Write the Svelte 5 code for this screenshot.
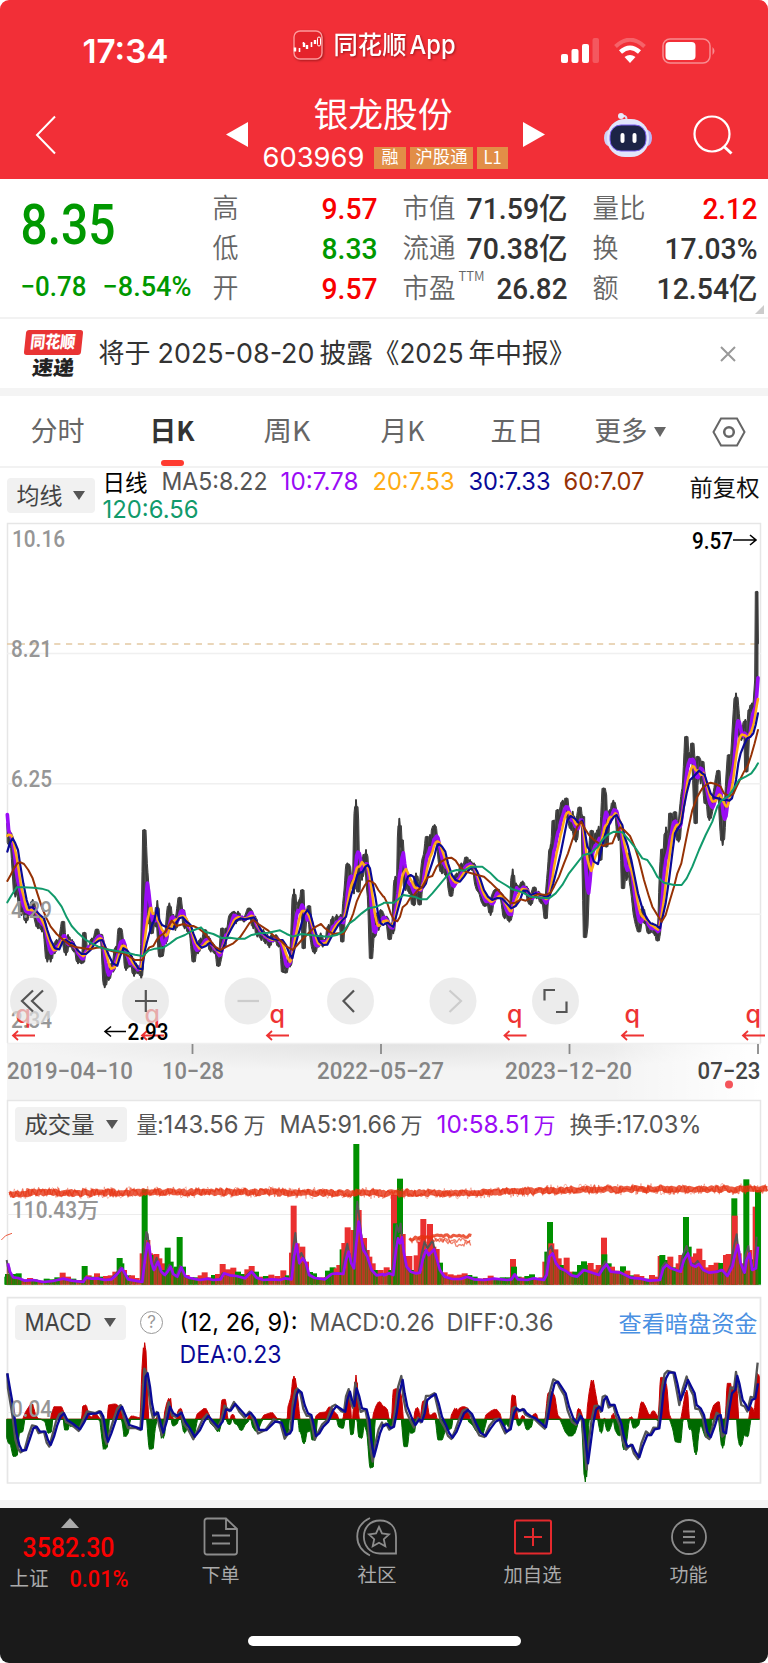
<script lang="ts">
	/**
	 * Stock detail page: quote header, daily K chart, volume and MACD panels.
	 * Chart coordinates are in thirds of a pixel.
	 */

	type Point = [number, number];

	const quotes = [
		{ label: '高', lw: 26, value: '9.57', w: 56, tone: 'up' },
		{ label: '市值', lw: 53, value: '71.59亿', w: 101, tone: '' },
		{ label: '量比', lw: 53, value: '2.12', w: 55, tone: 'up' },
		{ label: '低', lw: 26, value: '8.33', w: 56, tone: 'down' },
		{ label: '流通', lw: 53, value: '70.38亿', w: 101, tone: '' },
		{ label: '换', lw: 26, value: '17.03%', w: 93, tone: '' },
		{ label: '开', lw: 26, value: '9.57', w: 56, tone: 'up' },
		{ label: '市盈', lw: 53, sup: 'TTM', value: '26.82', w: 71, tone: '' },
		{ label: '额', lw: 26, value: '12.54亿', w: 101, tone: '' }
	];

	const tabs = [
		{ name: '分时', w: 54 },
		{ name: '日K', w: 45, active: true },
		{ name: '周K', w: 47 },
		{ name: '月K', w: 44 },
		{ name: '五日', w: 53 }
	];

	const averages = [
		{ text: 'MA5:8.22', w: 106, color: 'c5' },
		{ text: '10:7.78', w: 78, color: 'c10' },
		{ text: '20:7.53', w: 82, color: 'c20' },
		{ text: '30:7.33', w: 82, color: 'c30' },
		{ text: '60:7.07', w: 81, color: 'c60' }
	];

	// "x,y x,y ..." for the left and right halves of a plot
	function parse(text: string): Point[] {
		return text.trim().split(/\s+/).map((p) => p.split(',').map(Number) as Point);
	}

	function join(left: string, right: string, ly = 0, ry = 0): Point[] {
		return [
			...parse(left).map(([x, y]) => [x, y + ly] as Point),
			...parse(right).map(([x, y]) => [x + 1152, y + ry] as Point)
		];
	}

	const str = (pts: Point[]) => pts.map((p) => p.map((n) => n.toFixed(1)).join(',')).join(' ');

	const price = join(
		`22,70 28,140 34,100 40,190 46,290 52,240 58,300 64,345 70,310 78,368 84,330 90,345 98,300 106,350 114,385 120,350 126,395 132,360 138,430 142,485 148,440 152,485 158,430 164,460 170,420 178,440 184,400 189,365 193,430 198,465 204,405 210,440 216,420 222,455 228,440 234,490 240,465 244,490 250,485 253,398 258,460 264,440 270,450 276,415 282,430 286,410 291,388 297,415 303,404 308,430 314,562 320,520 326,540 334,490 340,515 348,440 354,460 358,385 362,388 368,450 374,430 378,510 384,480 390,500 396,470 402,528 408,490 414,520 420,500 424,535 428,400 433,90 437,190 442,260 446,370 450,330 455,400 462,340 468,380 472,303 476,400 480,470 486,468 492,400 498,430 504,345 508,310 514,370 520,345 526,390 532,350 539,293 544,340 549,330 554,385 560,360 566,400 572,380 577,440 581,485 588,430 594,460 602,415 608,440 615,390 620,430 626,410 632,455 638,430 644,460 650,450 655,498 661,470 667,385 673,440 678,385 684,400 690,350 696,340 702,335 708,370 714,335 720,360 726,350 732,365 740,345 747,325 754,335 760,385 766,350 772,410 778,380 784,420 790,390 796,430 802,405 808,442 814,405 820,425 828,405 836,440 844,425 849,515 857,518 864,480 870,500 876,440 882,268 886,330 892,340 898,300 902,320 907,270 911,445 915,330 921,360 927,318 933,400 939,440 944,460 950,420 956,440 962,400 968,440 974,420 980,430 986,375 992,400 998,350 1004,390 1010,345 1016,370 1022,345 1027,425 1032,320 1038,260 1042,190 1047,200 1052,260 1058,230 1062,280 1065,120 1068,0 1071,60 1075,275 1080,180 1086,240 1090,165 1094,200 1098,150 1103,250 1108,300 1113,475 1118,400 1124,410 1130,340 1136,390 1142,330 1148,345`,
		`2,425 8,410 13,440 17,478 24,430 28,460 34,290 40,350 43,290 46,116 50,200 53,180 58,260 64,330 70,300 76,340 82,310 86,370 90,376 96,280 102,330 107,374 112,300 118,240 124,220 129,170 134,230 138,165 142,220 147,150 152,135 157,190 162,180 168,250 174,280 180,230 186,290 192,260 196,320 201,348 208,300 212,315 218,280 226,300 232,250 240,270 247,232 253,270 258,240 264,270 270,250 276,310 282,330 290,340 296,365 303,378 310,350 315,370 320,405 326,350 334,330 341,328 347,350 352,340 358,380 362,415 368,395 376,425 382,400 386,268 390,340 396,310 402,340 410,320 416,304 422,340 428,320 434,360 440,375 446,340 451,322 458,355 464,335 472,370 478,350 485,415 490,330 496,260 500,195 504,240 509,122 514,190 518,130 521,90 526,130 530,100 536,62 541,80 547,55 552,110 558,130 562,150 566,95 571,160 576,185 581,120 587,82 592,130 597,110 599,250 603,472 607,440 612,300 617,240 623,152 628,210 634,160 640,180 644,140 649,240 654,130 659,25 664,50 667,200 673,120 678,90 683,100 688,62 693,90 698,100 704,180 710,130 714,200 717,325 722,260 728,300 734,220 740,300 746,340 752,400 758,430 765,455 770,420 776,380 782,430 788,420 794,460 800,455 806,430 812,465 816,450 821,482 826,450 830,300 835,208 840,270 846,142 851,230 856,170 859,100 864,110 868,140 873,96 878,160 884,185 890,100 896,40 900,20 904,-60 907,-130 911,-40 915,-80 921,-60 925,-110 930,-30 935,130 938,-40 941,-70 946,-60 950,10 955,-55 960,10 965,70 970,40 976,120 982,90 988,60 994,30 998,0 1003,-28 1008,60 1012,140 1016,195 1022,90 1027,60 1030,0 1035,-75 1040,30 1046,-90 1051,-180 1056,-260 1061,-200 1066,-140 1072,-120 1077,-150 1084,-180 1087,-25 1091,-120 1097,-210 1100,-210 1104,-230 1109,-200 1113,-240 1117,-300 1119,-565 1122,-410`,
		840,
		780
	);

	const ma30 = join(
		`22,155 30,128 38,115 46,130 54,150 60,190 70,250 80,300 88,325 95,318 105,330 120,345 132,355 142,390 152,420 165,445 178,448 188,425 197,420 210,428 222,432 232,450 245,462 258,462 272,450 285,430 297,422 307,420 316,440 326,465 338,490 352,497 360,470 370,445 380,450 392,465 405,490 415,505 427,508 433,460 440,430 448,400 456,375 463,360 471,325 478,360 486,375 497,380 508,385 519,388 528,370 537,355 548,352 560,365 572,375 580,400 592,430 605,443 618,438 630,428 640,436 652,450 665,455 675,430 684,405 695,385 708,362 722,355 735,358 748,355 762,352 770,365 780,385 790,400 805,412 820,418 835,420 848,420 858,435 868,460 877,475 885,440 893,410 902,380 912,345 922,330 932,345 940,375 948,400 958,425 970,435 982,434 992,415 1003,395 1015,375 1028,360 1038,350 1046,315 1055,280 1064,255 1072,225 1080,218 1088,215 1096,200 1104,195 1110,205 1118,250 1126,290 1134,340 1142,370 1150,375`,
		`2,432 12,428 20,436 28,440 36,410 44,380 54,345 64,310 72,290 80,285 88,290 98,312 108,322 118,322 126,310 134,280 144,250 152,225 158,200 165,192 174,200 184,215 192,250 204,285 215,300 228,305 240,290 250,275 262,262 272,262 280,275 290,300 300,330 312,350 325,360 340,354 355,356 368,370 382,385 395,378 408,360 418,332 430,332 440,345 455,340 470,345 488,350 498,345 508,310 518,270 530,220 542,160 550,120 560,108 572,115 585,130 595,122 602,150 610,200 620,215 630,245 642,252 650,220 660,175 668,150 680,125 690,110 698,105 706,120 715,135 722,170 732,200 742,240 752,290 762,340 775,385 788,415 800,430 815,435 828,445 836,410 845,370 855,300 865,220 873,160 882,145 892,130 900,80 908,40 918,0 928,-10 938,-20 945,-28 955,-20 962,-15 970,10 980,40 990,52 1002,55 1015,60 1028,60 1036,62 1044,55 1050,30 1056,0 1063,-50 1070,-80 1080,-105 1090,-125 1100,-130 1108,-140 1115,-165 1122,-200`,
		840,
		780
	);

	const ma60 = join(
		`22,243 32,225 42,205 52,190 62,187 72,192 85,210 98,235 112,280 125,320 138,352 152,380 170,402 190,420 210,435 230,442 250,445 270,448 290,443 310,442 325,450 345,456 365,458 385,468 405,480 428,480 436,460 448,442 460,438 470,420 480,408 492,400 502,385 515,362 530,378 550,372 565,378 580,378 595,385 612,398 630,420 645,440 662,450 680,440 700,430 720,412 735,390 748,370 760,360 775,372 790,382 805,392 825,410 845,425 860,440 878,450 892,435 905,420 920,405 935,390 948,380 963,372 975,385 988,395 1000,402 1015,400 1030,402 1040,385 1050,365 1060,340 1070,305 1082,278 1095,255 1105,242 1115,245 1125,252 1135,270 1150,290`,
		`0,350 10,370 20,400 30,420 40,424 48,410 56,382 68,372 78,355 90,345 102,330 115,320 130,293 145,288 158,260 172,245 188,235 202,233 215,242 228,262 245,275 262,280 280,285 300,290 320,308 340,328 360,350 380,370 395,368 410,358 425,362 445,352 462,342 485,345 500,338 510,320 525,290 540,250 552,220 565,180 580,140 592,125 602,145 615,165 630,180 645,190 658,198 670,192 685,190 697,160 708,142 720,150 738,168 752,200 765,240 780,300 795,350 805,380 820,405 833,425 845,405 858,360 870,320 880,280 892,250 902,200 912,150 925,90 940,50 955,25 970,12 980,8 995,12 1010,20 1020,40 1035,48 1048,42 1058,20 1070,-5 1080,-25 1092,-45 1102,-75 1112,-110 1122,-150`,
		840,
		780
	);

	const ma120 = join(
		`22,307 35,285 50,262 70,262 100,263 125,266 145,272 165,292 185,320 200,352 215,378 235,400 255,418 275,430 295,440 320,448 350,453 380,458 405,464 428,468 445,452 465,446 490,443 510,430 530,415 555,405 575,393 603,382 615,395 640,402 665,414 690,413 710,416 735,416 755,405 780,400 805,398 840,391 860,402 878,410 905,402 930,405 955,408 985,410 1010,405 1030,395 1048,370 1065,358 1085,340 1105,325 1130,320 1150,310`,
		`0,368 30,368 58,345 90,350 112,358 128,358 145,340 162,320 180,298 200,275 218,270 240,272 262,260 295,260 318,278 340,300 365,315 385,328 410,335 440,350 470,353 495,355 515,340 535,315 555,280 575,255 598,225 620,220 640,202 655,180 670,165 690,155 715,157 735,180 755,205 775,235 790,240 805,262 820,290 840,308 870,315 893,315 908,295 925,260 945,210 965,165 985,125 1000,80 1012,62 1032,50 1050,25 1065,0 1085,-10 1102,-20 1115,-38 1122,-50`,
		840,
		780
	);

	function at(pts: Point[], x: number) {
		if (x <= pts[0][0]) return pts[0][1];
		for (let i = 1; i < pts.length; i++) {
			if (pts[i][0] >= x) {
				const [x0, y0] = pts[i - 1];
				const [x1, y1] = pts[i];
				return x1 === x0 ? y1 : y0 + ((y1 - y0) * (x - x0)) / (x1 - x0);
			}
		}
		return pts[pts.length - 1][1];
	}

	// high-low band that fills the gaps between neighbouring candles
	function band(): string {
		const top: Point[] = [];
		const bottom: Point[] = [];
		for (let x = 22; x <= 2274; x += 2) {
			const near = [-5, -3, -1, 0, 1, 3, 5].map((d) => at(price, x + d));
			top.push([x, Math.min(...near)]);
			bottom.unshift([x, Math.max(...near)]);
		}
		return str([...top, ...bottom]);
	}

	// short averages follow the price a little ahead of MA30
	function lead(span: number, ahead: number, mix: number): Point[] {
		const out: Point[] = [];
		for (let x = 22; x <= 2274; x += 4) {
			let sum = 0;
			for (let k = 0; k < span; k++) sum += at(price, x - k * 3);
			out.push([x, (sum / span) * mix + at(ma30, x + ahead) * (1 - mix)]);
		}
		return out;
	}
	const ma10 = lead(5, 9, 0.75);
	const ma20 = lead(8, 5, 0.45);
	ma10[0][1] = 884;

	const bars = (text: string, dx: number) =>
		text
			.trim()
			.split(/\s+/)
			.map((b) => {
				const [x, y] = b.slice(1).split(',').map(Number);
				return { x: x + dx, y, up: b[0] === 'r' };
			});

	const volumes = [
		...bars(
			`g22,560 g38,556 g56,550 r72,570 r90,564 g104,568 r120,572 g140,566 g156,568 g172,562 r188,548 r204,560 g220,566 r238,570 g254,528 r266,556 g278,560 r291,550 g304,560 r318,558 r332,556 r346,545 g359,504 g364,520 r372,540 g384,556 r396,556 r410,564 r428,490 g434,298 r442,450 r450,490 g459,495 r469,492 r478,505 r486,520 g494,540 g503,473 g512,515 r522,535 g530,530 r539,441 g549,530 r560,555 g574,562 g588,562 r602,556 r614,547 r628,562 g642,555 r654,552 r668,522 r684,538 r700,533 g714,545 g728,552 r742,538 r755,528 g768,545 r782,560 g798,558 r814,554 r832,558 r850,541 g864,556 r876,488 r881,347 r890,460 g898,490 r907,470 r918,515 g930,546 g942,550 g956,564 r970,562 g984,542 g998,532 r1010,535 r1018,525 g1028,478 r1033,459 r1043,412 g1052,490 r1060,420 g1069,162 r1076,360 r1084,445 r1092,444 r1100,480 r1108,500 r1118,520 g1128,540 r1142,540`.replace('r539', 'g539'),
			0
		),
		...bars(
			`r8,532 g22,540 r30,315 g36,400 g48,266 r56,432 r66,498 r76,498 g86,540 r98,496 r110,455 r118,387 g128,480 r138,402 r148,470 r158,477 g168,518 r182,547 r200,553 r214,556 r228,554 r242,550 g256,555 g272,560 r290,566 r306,564 r320,557 g338,566 g356,562 g372,562 r387,507 g390,530 g404,560 r416,562 g430,558 g444,553 r458,564 r472,562 r484,515 g490,485 g498,396 r502,460 r514,478 r524,505 g536,525 r548,503 r560,545 g574,545 g588,525 g600,514 g612,525 r620,519 r632,538 r644,525 r660,443 g661,493 g674,520 r684,530 r698,542 g717,529 r730,542 g744,556 r758,553 r772,558 g788,566 r804,555 r820,560 r830,498 g835,495 g846,510 r859,500 g872,532 r884,520 r892,495 g906,381 g914,470 r922,500 r936,490 r946,476 r956,510 r968,532 r982,525 r998,518 g1012,519 r1026,495 r1034,492 r1042,510 g1051,325 r1052,377 r1064,490 r1074,520 g1087,268 r1096,480 g1106,508 r1115,350 g1122,300`,
			1152
		)
	];

	const volumeMa = join(
		`24,520 30,545 40,562 55,564 75,572 100,570 130,576 160,573 190,566 215,572 250,576 258,563 275,566 292,565 315,570 335,568 352,552 366,535 375,550 385,568 405,572 427,576 436,500 443,460 447,465 455,520 462,540 474,515 484,545 495,555 503,545 512,530 520,552 532,560 544,532 556,558 570,564 600,570 625,566 640,570 662,568 672,550 690,556 710,558 735,565 755,545 770,563 790,570 815,568 840,570 855,565 875,568 882,500 890,462 898,520 908,505 918,520 928,555 945,564 975,568 995,552 1012,550 1030,552 1038,510 1046,485 1054,520 1062,535 1068,470 1076,395 1082,430 1090,480 1102,500 1115,540 1130,556 1150,552`,
		`0,556 15,550 28,555 36,480 42,445 48,460 54,442 60,490 68,530 80,545 95,550 108,548 116,510 126,480 134,495 150,478 158,505 168,540 182,560 205,567 230,567 250,560 270,568 300,570 330,566 370,570 383,568 393,553 402,568 430,570 450,565 480,570 488,555 496,500 506,490 516,520 528,535 545,542 562,556 580,560 600,540 625,548 645,555 658,535 668,523 680,545 710,548 740,563 770,566 795,572 828,570 838,535 848,525 860,535 875,540 890,545 900,510 912,490 922,525 935,530 945,522 958,540 975,548 1000,545 1015,540 1030,558 1045,530 1054,490 1062,465 1070,520 1082,548 1088,510 1097,490 1105,540 1116,535 1122,470`
	);

	// alternating thin columns below the average
	const columns = Array.from({ length: 376 }, (_, i) => {
		const x = 20 + i * 6;
		return { x, y: Math.min(576, at(volumeMa, x) + 4), up: (i * 7) % 11 < 5 };
	});

	const volumeMa5 = volumeMa.map(([x, y]) => [x - 4, y < 545 ? y - (545 - y) * 0.4 : y] as Point);

	const hist = join(
		`20,390 22,440 28,460 34,462 42,500 50,495 54,430 66,425 72,385 80,365 95,342 104,375 112,386 125,388 138,395 146,430 152,425 156,375 165,350 182,350 192,375 196,420 202,420 206,395 215,410 228,402 240,412 248,400 250,350 256,345 264,375 276,385 285,370 296,385 303,395 308,440 313,478 320,470 324,400 328,345 345,342 355,350 364,375 370,400 375,440 382,430 388,390 396,378 410,382 424,385 428,250 434,158 438,260 442,370 446,430 450,478 457,475 462,420 468,390 474,380 482,410 487,445 492,430 496,370 503,340 509,325 514,375 520,408 530,400 536,365 542,355 547,390 554,430 560,400 570,415 580,440 588,395 594,372 615,355 625,375 634,400 645,410 655,425 663,395 668,330 674,328 680,385 688,405 698,372 706,400 715,405 724,422 732,405 742,395 752,368 760,410 770,425 782,395 795,375 815,368 828,385 845,388 855,440 862,430 867,350 876,320 882,258 888,300 895,370 901,425 906,430 912,462 918,425 926,425 932,395 938,450 944,450 950,378 962,368 980,366 990,350 1000,365 1010,375 1018,410 1028,415 1036,360 1043,310 1048,330 1054,435 1058,430 1064,340 1068,255 1073,370 1078,440 1084,445 1090,400 1098,410 1104,430 1112,534 1118,530 1122,375 1130,350 1138,335 1145,348 1150,350`,
		`0,350 8,360 12,388 20,410 26,390 30,300 38,296 44,300 50,320 56,400 62,470 68,470 74,410 82,430 90,425 94,370 100,352 106,385 112,385 118,335 126,330 132,375 145,375 152,368 158,395 164,450 172,450 180,425 200,415 205,375 215,355 222,372 228,355 238,350 250,355 256,395 268,405 280,425 295,430 303,400 308,375 325,362 335,358 346,372 352,400 360,408 368,395 376,412 382,388 386,315 391,318 396,370 404,408 412,395 416,375 424,400 430,420 440,410 446,380 454,370 462,395 476,395 484,415 488,370 494,310 502,305 510,320 518,375 530,388 536,400 546,425 556,438 562,438 570,430 578,405 584,355 590,370 596,395 600,480 604,576 609,500 612,360 618,310 625,270 632,310 640,355 646,400 652,430 656,395 662,385 672,425 680,405 688,370 696,420 706,438 714,415 720,480 726,450 732,395 742,380 750,415 762,405 768,370 774,335 782,350 790,370 800,380 808,362 818,380 824,395 828,350 832,262 838,265 846,290 852,370 862,395 870,420 876,455 888,458 894,385 900,350 908,300 912,375 918,420 924,400 930,450 936,495 940,440 946,405 956,410 966,440 976,445 982,375 992,345 1004,335 1008,400 1016,475 1022,430 1028,370 1032,280 1038,280 1042,340 1048,290 1056,290 1060,370 1064,440 1070,470 1078,430 1084,435 1090,440 1096,400 1102,350 1108,370 1112,385 1118,320 1120,250 1124,265`
	);

	function area(sign: number): string {
		const pts: Point[] = [[20, 388]];
		for (let x = 20; x <= 2278; x += 2) {
			const near = [-3, 0, 3].map((d) => at(hist, x + d));
			const y = sign < 0 ? Math.min(...near) : Math.max(...near);
			pts.push([x, sign < 0 ? Math.min(388, y) : Math.max(388, y)]);
		}
		pts.push([2278, 388]);
		return str(pts);
	}

	const dea = join(
		`22,250 28,285 36,330 42,370 50,430 58,465 66,482 78,480 90,445 100,415 110,410 120,425 136,425 144,450 152,465 162,440 172,405 182,380 192,370 202,390 220,402 240,418 252,398 265,372 290,370 302,365 310,380 318,430 324,455 334,430 346,395 356,365 366,350 376,375 388,405 410,412 425,418 432,340 437,260 443,250 450,290 456,340 463,375 474,368 482,400 490,428 500,395 510,350 520,370 532,378 545,368 556,395 570,415 584,440 600,420 612,395 625,378 640,395 655,412 668,395 678,358 692,362 706,342 722,360 738,378 752,368 765,385 778,420 800,420 825,395 845,398 858,435 870,430 876,420 882,360 890,315 896,300 905,308 914,345 924,370 934,375 940,400 948,438 958,430 970,410 985,395 1000,360 1010,348 1028,360 1036,365 1042,330 1050,305 1056,330 1063,348 1070,295 1078,320 1086,355 1100,358 1108,390 1114,450 1122,500 1130,470 1140,430 1150,405`,
		`0,408 10,402 20,415 30,410 38,370 46,310 56,270 62,310 70,350 82,380 94,405 106,388 114,395 122,370 130,330 142,320 155,312 164,340 174,380 186,405 196,430 206,443 218,425 230,395 240,370 252,360 264,372 276,400 290,428 305,438 320,415 335,395 348,388 360,408 368,425 380,418 390,370 398,355 408,362 420,358 428,370 440,378 455,385 470,398 486,412 494,370 502,320 512,280 522,275 532,290 545,310 555,350 568,385 580,400 590,378 598,390 606,460 612,520 620,460 628,400 636,360 646,350 654,362 660,330 668,320 678,345 692,345 700,370 712,400 720,440 730,470 745,465 754,485 766,502 776,470 790,435 802,435 812,418 826,415 832,370 838,310 846,265 855,248 872,248 880,280 890,330 900,305 912,270 922,290 932,310 938,345 950,355 960,375 970,425 980,442 992,410 1002,378 1010,375 1018,425 1026,430 1034,370 1044,310 1054,300 1060,258 1066,280 1076,330 1086,345 1094,360 1104,330 1114,325 1122,280`
	);
	const diff = dea.map(([x, y], i) => {
		const prev = i ? dea[i - 1][1] : y;
		return [Math.max(22, x - 4), y + (y - prev) * 0.3] as Point;
	});
	diff[diff.length - 1] = [2273, 218];

	// rough marker strokes drawn by hand over the volume panel
	function noise(n: number) {
		const v = Math.sin(n * 127.1 + 311.7) * 43758.5453;
		return v - Math.floor(v) - 0.5;
	}
	function scribble(base: Point[], spread: number, seed: number, step = 6): string {
		const out: Point[] = [];
		for (let x = base[0][0]; x <= base[base.length - 1][0]; x += step) {
			out.push([x, at(base, x) + noise(x + seed) * spread]);
		}
		return str(out);
	}
	const marker: Point[] = [[28, 318], [50, 312], [120, 306], [200, 309], [500, 306], [640, 308], [730, 305], [900, 309], [1400, 309], [1640, 302], [1800, 298], [2304, 298]];
	const arrow: Point[] = [[1228, 448], [1262, 440], [1310, 438], [1414, 438]];
	const arrowTail: Point[] = [[1228, 449], [1290, 450], [1360, 458], [1412, 464]];

	const marks = [12, 141, 266, 503.5, 621, 742];
	const dates = [
		{ text: '2019-04-10', x: 7, w: 126 },
		{ text: '10-28', x: 162, w: 62 },
		{ text: '2022-05-27', x: 317, w: 127 },
		{ text: '2023-12-20', x: 505, w: 127 }
	];
</script>

{#snippet fit(text: string, w: number, size: number, cls = '')}
	<svg class="fit {cls}" width={w} height={size} font-size={size}>
		<text x="-0.5" y={size * 0.85} textLength={w} lengthAdjust="spacingAndGlyphs">{text}</text>
	</svg>
{/snippet}

{#snippet tick(text: string, x: number, y: number, w: number, size = 23, cls = '')}
	<text class={cls} {x} {y} font-size={size} textLength={w} lengthAdjust="spacingAndGlyphs">{text}</text>
{/snippet}

{#snippet caret()}
	<svg class="caret" width="12" height="9"><path d="M0 0H12L6 9Z" /></svg>
{/snippet}

<div class="screen">
	<header>
		<div class="status">
			<span class="time">{@render fit('17:34', 86, 33)}</span>
			<div class="app">
				<svg width="30" height="31" viewBox="0 0 30 31">
					<rect x="1" y="1" width="28" height="28" rx="6" fill="#e5232b" stroke="#ff9a9c" stroke-width="1.4" />
					<path d="M2 21.500v-4M11 17v-4M14 19v-4M22 14v-4" stroke="#fff" stroke-width="2.400" />
					<path d="M6.500 18v4M10.500 12v2M18.500 12v5" stroke="#fff" stroke-width="1.600" />
					<rect x="24.500" y="7" width="3" height="9" rx="1.500" fill="none" stroke="#fff" />
				</svg>
				{@render fit('同花顺', 73, 25)}
				{@render fit('App', 46, 26, 'gap-s')}
			</div>
			<div class="signals">
				<svg width="40" height="26" viewBox="0 0 40 26" fill="#fff">
					<rect x="0" y="16" width="7" height="9" rx="2" />
					<rect x="10.500" y="11" width="7" height="14" rx="2" />
					<rect x="21" y="6" width="7" height="19" rx="2" />
					<rect x="31.500" y="0" width="6.500" height="25" rx="2" opacity="0.2" />
				</svg>
				<svg class="wifi" width="32" height="26" viewBox="0 0 32 26" fill="none" stroke="#fff">
					<path d="M1.500 8.500Q16-5 30.500 8.500" stroke-width="4" opacity="0.25" />
					<path d="M6.500 14Q16 5.500 25.500 14" stroke-width="4.500" />
					<path d="M16 25l-5.500-6q5.500-4 11 0z" fill="#fff" stroke="none" />
				</svg>
				<svg width="54" height="26" viewBox="0 0 54 26">
					<rect x="1" y="1" width="47" height="24" rx="7" fill="none" stroke="#fff" stroke-width="1.500" opacity="0.45" />
					<rect x="3.500" y="4" width="30" height="18" rx="4" fill="#fff" />
					<path d="M50.500 9q4 4 0 8z" fill="#fff" opacity="0.45" />
				</svg>
			</div>
		</div>
		<div class="title">
			<svg width="22" height="40" viewBox="0 0 22 40"><path d="M20 1.500L2 20 20 38.500" fill="none" stroke="#fff" stroke-width="2" /></svg>
			<svg class="prev" width="22" height="25"><path d="M22 0V25L0 12.500Z" fill="#fff" /></svg>
			<div class="name">
				{@render fit('银龙股份', 139, 34)}
				<div class="code">
					{@render fit('603969', 102, 27, 'inter')}
					<span class="tag t1">{@render fit('融', 17, 17)}</span>
					<span class="tag t2">{@render fit('沪股通', 52, 17)}</span>
					<span class="tag t3">{@render fit('L1', 18, 18)}</span>
				</div>
			</div>
			<svg class="next" width="22" height="25"><path d="M0 0V25L22 12.500Z" fill="#fff" /></svg>
			<svg class="robot" width="48" height="46" viewBox="0 0 48 46">
				<path d="M17 4q7-1 5 5" fill="none" stroke="#d9dcf2" stroke-width="2" />
				<circle cx="17" cy="4" r="3" fill="#e8ebfb" />
				<ellipse cx="5" cy="26" rx="5" ry="8" fill="#cdd2f6" />
				<ellipse cx="43" cy="26" rx="5" ry="8" fill="#b9b5f5" />
				<rect x="3" y="7" width="42" height="38" rx="18" fill="#e2e6fb" />
				<rect x="6" y="13" width="36" height="26" rx="11" fill="#1c2446" stroke="#7a5cf0" stroke-width="1" />
				<path d="M18.500 23v6M30.500 23v6" stroke="#fff" stroke-width="4" stroke-linecap="round" />
			</svg>
			<svg class="search" width="40" height="40" viewBox="0 0 40 40" fill="none" stroke="#fff" stroke-width="2.200">
				<circle cx="19" cy="19" r="17.500" /><path d="M31 31.500l7.500 7" stroke-width="3" />
			</svg>
		</div>
	</header>

	<section class="quote">
		<div class="last down">
			{@render fit('8.35', 95, 55, 'num')}
			<div class="change">{@render fit('−0.78', 66, 28, 'num')}{@render fit('−8.54%', 89, 28, 'num')}</div>
		</div>
		<div class="cells">
			{#each quotes as q}
				<div class="cell">
					<span class="key">{@render fit(q.label, q.lw, 27)}{#if q.sup}<sup>{@render fit(q.sup, 26, 13)}</sup>{/if}</span>
					<span class={q.tone}>{@render fit(q.value, q.w, 30, 'num')}</span>
				</div>
			{/each}
		</div>
		<svg class="corner" width="9" height="9"><path d="M9 0V9H0Z" fill="#ccc" /></svg>
	</section>

	<section class="notice">
		<div class="logo">
			<div class="logo-top">{@render fit('同花顺', 45, 17)}</div>
			<div class="logo-bottom">{@render fit('速递', 42, 20)}</div>
		</div>
		<div class="notice-text">
			{@render fit('将于', 52, 27)}
			{@render fit('2025-08-20', 157, 27, 'inter')}
			{@render fit('披露《', 80, 27)}
			{@render fit('2025', 64, 27, 'inter')}
			{@render fit('年中报》', 107, 27)}
		</div>
		<svg width="16" height="16"><path d="M1 1L15 15M15 1L1 15" stroke="#999" stroke-width="2" /></svg>
	</section>

	<nav class="tabs">
		{#each tabs as tab}
			<div class="tab" class:active={tab.active}>{@render fit(tab.name, tab.w, 27)}</div>
		{/each}
		<div class="tab more">{@render fit('更多', 53, 27)}<svg width="12" height="10"><path d="M0 0H12L6 10Z" fill="#666" /></svg></div>
		<div class="tab gear">
			<svg width="34" height="30" viewBox="0 0 34 30" fill="none" stroke="#666" stroke-width="2">
				<path d="M9 1.500H25L32.500 15 25 28.500H9L1.500 15Z" /><circle cx="17" cy="15" r="4.800" stroke-width="2.500" />
			</svg>
		</div>
	</nav>

	<section class="indicator">
		<button class="pick ma">{@render fit('均线', 46, 23)}{@render caret()}</button>
		<div class="averages">
			<div class="line">
				{@render fit('日线', 45, 23, 'black')}
				{#each averages as a}{@render fit(a.text, a.w, 24, `inter ${a.color}`)}{/each}
			</div>
			<div class="line">{@render fit('120:6.56', 96, 24, 'inter c120')}</div>
		</div>
		<div class="adjust">{@render fit('前复权', 70, 23)}</div>
	</section>

	<svg class="chart" width="768" height="580" viewBox="0 520 768 580">
		<defs>
			<radialGradient id="axis" cx="0.52" cy="0" r="0.5">
				<stop offset="0" stop-color="#e2e2e2" /><stop offset="1" stop-color="#f4f4f4" />
			</radialGradient>
			<linearGradient id="fade"><stop offset="0.8" stop-color="#fff" stop-opacity="0" /><stop offset="1" stop-color="#fff" /></linearGradient>
		</defs>
		<rect x="7" y="1043" width="754" height="57" fill="url(#axis)" />
		<rect x="7" y="1043" width="754" height="57" fill="url(#fade)" />
		<path d="M7.500 1043V523.500H760.500V1043" fill="none" stroke="#e6e6e6" stroke-width="1.500" />
		<path d="M7 653.500H761M7 783.700H761M7 914.200H761M7 1043.500H761" stroke="#f0f0f0" stroke-width="1.500" />
		<path d="M7 644H758" stroke="#e4c9a3" stroke-width="1.400" stroke-dasharray="6.200 5.600" />
		<g transform="translate(0 520) scale(0.33333)" fill="none" stroke-linejoin="round" stroke-linecap="round">
			<polygon points={band()} fill="#555" stroke="#3c3c3c" stroke-width="3" />
			<polyline points={str(price)} stroke="#3a3a3a" stroke-width="5.500" />
			<polyline points={str(ma10)} stroke="#9a0cf5" stroke-width="11" />
			<polyline points={str(ma20)} stroke="#ffab14" stroke-width="7.500" />
			<polyline points={str(ma30)} stroke="#0a0a96" stroke-width="6.500" />
			<polyline points={str(ma60)} stroke="#963205" stroke-width="6" />
			<polyline points={str(ma120)} stroke="#119a6b" stroke-width="6" />
		</g>
		<g class="num axis-text">
			{@render tick('10.16', 12, 546.5, 53)}
			{@render tick('8.21', 11, 657, 41)}
			{@render tick('6.25', 11, 787, 41)}
			{@render tick('4.29', 11, 917.5, 41)}
			{@render tick('2.34', 11, 1028, 41)}
		</g>
		{#each marks as x}
			<g>
				<text class="q" x={x + 3.5} y="1022.500" font-size="25">q</text>
				<path d="M{x + 23} 1035.500H{x + 1}M{x + 6} 1031l-5 4.500 5 4.500" fill="none" stroke="#e33" stroke-width="1.800" />
			</g>
		{/each}
		<g fill="#e3e3e3" fill-opacity="0.68">
			{#each [33.5, 145.5, 248, 350.5, 453, 555.5] as cx}<circle {cx} cy="1001" r="23.500" />{/each}
		</g>
		<g fill="none" stroke="#555" stroke-width="2.200">
			<path d="M33 990.500L22 1001l11 10.500M43 990.500L32 1001l11 10.500" />
			<path d="M135 1001h22M145.800 990v22" />
			<path d="M237.500 1001h21.500" stroke="#ccc" />
			<path d="M354 990.500L343.500 1001 354 1012" />
			<path d="M449.500 990.500L461 1001l-11.500 11" stroke="#ccc" />
			<path d="M544.500 1000.500v-10.500h10.500M556 1012h10.500v-10.500" />
		</g>
		{@render tick('9.57', 692, 548.5, 41, 24, 'num black')}
		{@render tick('2.93', 127.5, 1040, 41, 24, 'num black')}
		<path d="M733 540H756M750 535l6 5-6 5M126 1031.500H105M111 1026.500l-6 5 6 5" fill="none" stroke="#000" stroke-width="1.600" />
		<path d="M192.500 1044v10M381 1044v10M569.500 1044v10M758 1044v10" stroke="#8a8a8a" stroke-width="1.800" />
		<g class="num dates">
			{#each dates as d}{@render tick(d.text.replaceAll('-', '−'), d.x, 1079, d.w, 24)}{/each}
			{@render tick('07−23', 697.5, 1079, 63, 24, 'today')}
		</g>
		<circle cx="729" cy="1084.500" r="4" fill="#f4545a" />
	</svg>

	<section class="panel volume">
		<div class="head">
			<button class="pick vol">{@render fit('成交量', 70, 23)}{@render caret()}</button>
			{@render fit('量:', 27, 23, 'v0')}
			{@render fit('143.56', 75, 24, 'inter')}
			{@render fit('万', 22, 22, 'v3')}
			{@render fit('MA5:91.66', 117, 24, 'inter v1')}
			{@render fit('万', 22, 22, 'v4')}
			{@render fit('10:58.51', 93, 24, 'inter v2 c10')}
			{@render fit('万', 22, 22, 'v4 c10')}
			{@render fit('换手:', 53, 23, 'v2')}
			{@render fit('17.03%', 79, 24, 'inter')}
		</div>
		<svg class="plot" width="768" height="200" viewBox="0 1090 768 200">
			<path d="M7.500 1100.500H760.500V1285H7.500Z" fill="none" stroke="#e6e6e6" stroke-width="1.500" />
			<path d="M7 1214.500H761" stroke="#ededed" stroke-width="1.200" />
			<g class="num axis-text">
				{@render tick('110.43', 12, 1217.5, 65)}{@render tick('万', 77, 1217.5, 22, 22)}
			</g>
			<g transform="translate(0 1090) scale(0.33333)" fill="none" stroke-linejoin="round">
				<polygon points="15,584 15,552 48,552 64,566 64,584" fill="#008f00" />
				{#each volumes as v}
					<rect x={v.x - 9} y={v.y} width="18" height={584 - v.y} fill={v.up ? '#ea3030' : '#009000'} />
				{/each}
				{#each columns as c}
					<rect x={c.x} y={c.y} width="5" height={584 - c.y} fill={c.up ? '#a03c1c' : '#4a6c10'} opacity="0.75" />
				{/each}
				<polyline points={str(volumeMa5)} stroke="#555" stroke-width="6" />
				<polyline points={str(volumeMa)} stroke="#9a0cf5" stroke-width="8" />
				<g stroke="#e6310f">
					<polyline points={scribble(marker, 8, 1)} stroke-width="17" opacity="0.78" />
					<polyline points={scribble(marker, 28, 5, 4)} stroke-width="4" opacity="0.65" />
					<polyline points={scribble(marker, 36, 9, 5)} stroke-width="2" opacity="0.5" />
					<polyline points={scribble(arrow, 8, 2)} stroke-width="9" opacity="0.8" />
					<polyline points={scribble(arrowTail, 20, 3, 4)} stroke-width="4" opacity="0.6" />
					<polyline points={scribble([[1250, 444], [1412, 452]], 18, 7, 4)} stroke-width="4" opacity="0.6" />
					<path d="M4 450Q14 434 36 430" stroke-width="3" opacity="0.8" />
				</g>
			</g>
		</svg>
	</section>

	<section class="panel macd">
		<div class="head">
			<button class="pick mac">{@render fit('MACD', 67, 24, 'inter')}{@render caret()}</button>
			<div class="help">?</div>
			<div class="values">
				<div class="line">
					{@render fit('(12, 26, 9):', 118, 24, 'inter black')}
					{@render fit('MACD:0.26', 125, 24, 'inter m1')}
					{@render fit('DIFF:0.36', 107, 24, 'inter m2')}
				</div>
				<div class="line">{@render fit('DEA:0.23', 102, 24, 'inter c30')}</div>
			</div>
			<div class="link">{@render fit('查看暗盘资金', 139, 23)}</div>
		</div>
		<svg class="plot" width="768" height="210" viewBox="0 1290 768 210">
			<path d="M7.500 1297.700H760.500V1483H7.500Z" fill="none" stroke="#e6e6e6" stroke-width="1.700" />
			<path d="M7 1412.500H761" stroke="#ededed" stroke-width="1.200" />
			<g transform="translate(0 1290) scale(0.33333)" fill="none" stroke-linejoin="round">
				<polygon points={area(-1)} fill="#c80000" stroke="#c80000" stroke-width="3" />
				<polygon points={area(1)} fill="#006a00" stroke="#006a00" stroke-width="3" />
				<polyline points={str(diff)} stroke="#555" stroke-width="7" />
				<polyline points={str(dea)} stroke="#0a0a96" stroke-width="7" />
			</g>
			{@render tick('0.04', 11, 1416.5, 41, 23, 'num axis-text')}
		</svg>
	</section>

	<footer>
		<div class="index">
			<svg width="18" height="10"><path d="M9 0L18 10H0Z" fill="#aaa" /></svg>
			{@render fit('3582.30', 92, 28, 'num up')}
			<div class="index-row">{@render fit('上证', 39, 20, 'muted')}{@render fit('0.01%', 59, 24, 'num up')}</div>
		</div>
		<div class="item">
			<svg width="36" height="40" viewBox="0 0 36 40" fill="none" stroke="#8c8c8c" stroke-width="1.800">
				<path d="M4 1.500H23L34 12V35Q34 37.500 31.500 37.500H4Q1.500 37.500 1.500 35V4Q1.500 1.500 4 1.500ZM23 1.500V12H34M9 18.500H27M9 26.500H27" />
			</svg>
			{@render fit('下单', 38, 19)}
		</div>
		<div class="item">
			<svg width="42" height="40" viewBox="0 0 42 40" fill="none" stroke="#8c8c8c" stroke-width="1.800">
				<path d="M14 1C-3 9-3 30 14 38.500M40 36.500H24C3 36.500 2 3.500 24 3.500 34 3.500 40 10 40 20Z" />
				<path d="M23 10l3 6.500 7 .8-5.200 4.900 1.500 7.100-6.300-3.500-6.300 3.500 1.500-7.100L13 17.300l7-.8z" />
			</svg>
			{@render fit('社区', 39, 19)}
		</div>
		<div class="item">
			<svg width="38" height="40" viewBox="0 0 38 40" fill="none" stroke="#e5292d" stroke-width="2">
				<rect x="1" y="3.500" width="36" height="33" rx="1.500" /><path d="M10 20H28M19 11V29" />
			</svg>
			{@render fit('加自选', 58, 19)}
		</div>
		<div class="item">
			<svg width="36" height="40" viewBox="0 0 36 40" fill="none" stroke="#8c8c8c" stroke-width="1.800">
				<circle cx="18" cy="20" r="17" /><path d="M12 14.500H24M12 20H24M12 25.500H24" />
			</svg>
			{@render fit('功能', 38, 19)}
		</div>
		<div class="home"></div>
	</footer>
</div>

<style>
	:global(body) {
		background: #fff;
	}

	.screen {
		width: 768px;
		height: 1663px;
		background: #fff;
		color: #333;
		font-family: 'Noto Sans CJK SC', sans-serif;
		overflow: hidden;
	}

	svg {
		display: block;
		flex: none;
	}

	.fit {
		overflow: visible;
		fill: currentColor;
	}

	.num {
		font-family: Roboto, 'Noto Sans CJK SC', sans-serif;
		font-weight: 500;
	}

	.inter {
		font-family: Inter, 'Noto Sans CJK SC', sans-serif;
	}

	.up { color: #f80000; }
	.down { color: #009800; }
	.black { color: #000; fill: #000; }
	.c5 { color: #555; }
	.c10 { color: #9a0cf5; }
	.c20 { color: #ffab14; }
	.c30 { color: #0a0a96; }
	.c60 { color: #963205; }
	.c120 { color: #119a6b; }

	/* Header */
	header {
		height: 179px;
		background: #f22f37;
		color: #fff;
		border-radius: 9px 9px 0 0;
	}

	.status {
		display: flex;
		height: 90px;
		box-sizing: border-box;
		padding: 29px 50px 0 83px;
	}

	.time {
		font-family: Inter, sans-serif;
		font-weight: 600;
		padding-top: 6px;
	}

	.app {
		display: flex;
		align-items: center;
		height: 32px;
		margin-left: 124px;
		font-weight: 500;
		filter: drop-shadow(1px 1px 1px rgba(80, 0, 0, 0.5));
	}

	.app svg:first-child { margin-right: 11px; }
	.app :global(.gap-s) { margin-left: 3px; font-family: Inter, sans-serif; }

	.signals {
		display: flex;
		margin: 9px 0 0 105px;
	}

	.wifi {
		margin: 0 16px 0 13px;
	}

	.title {
		display: flex;
		align-items: flex-start;
		padding: 0 36px;
		height: 89px;
	}

	.title > svg:first-child { margin: 25px 0 0 -1px; }
	.prev { margin: 32px 0 0 169px; }
	.next { margin: 32px 0 0 14px; }
	.robot { margin: 22px 0 0 59px; }
	.search { margin: 25px 0 0 41px; }

	.name {
		display: flex;
		flex-direction: column;
		width: 246px;
		margin-left: 15px;
		padding-top: 8px;
	}

	.name > :global(.fit) {
		margin-left: 51px;
	}

	.code {
		display: flex;
		align-items: center;
		margin-top: 10px;
		height: 30px;
	}

	.tag {
		display: flex;
		align-items: center;
		justify-content: center;
		height: 22px;
		background: #e28e47;
		margin: 1px 4px 0 0;
		flex: none;
	}

	.t1 { width: 32px; margin-left: 9px; }
	.t2 { width: 63px; }
	.t3 { width: 31px; }

	/* Quote */
	.quote {
		position: relative;
		display: flex;
		height: 138px;
		border-bottom: 2px solid #f2f2f2;
	}

	.last {
		width: 192px;
		padding: 18px 0 0 21px;
		box-sizing: border-box;
	}

	.change {
		display: flex;
		gap: 16px;
		margin-top: 20px;
	}

	.cells {
		display: grid;
		grid-template-columns: repeat(3, 165px);
		column-gap: 25px;
		grid-auto-rows: 40px;
		margin: 9px 0 0 21px;
	}

	.cell {
		display: flex;
		align-items: center;
		justify-content: space-between;
	}

	.key {
		display: flex;
		color: #666;
		font-weight: 350;
	}

	sup {
		margin: -5px 0 0 3px;
	}

	.corner {
		position: absolute;
		right: 4px;
		bottom: 3px;
	}

	/* Notice */
	.notice {
		display: flex;
		align-items: center;
		height: 69px;
		padding: 0 32px 0 25px;
		border-bottom: 8px solid #f4f4f4;
	}

	.logo {
		width: 57px;
		height: 48px;
		margin-right: 17px;
		font-weight: 900;
	}

	.logo-top {
		display: flex;
		align-items: center;
		justify-content: center;
		height: 25px;
		background: #e93434;
		color: #fff;
		border-radius: 3px;
		transform: skewX(-6deg);
	}

	.logo-bottom {
		display: flex;
		justify-content: center;
		padding-top: 3px;
		color: #222;
		transform: skewX(-6deg);
	}

	.notice-text {
		display: flex;
		flex: 1;
	}

	.notice-text :global(.fit:nth-child(2)) { margin: 0 5px 0 7px; }
	.notice-text :global(.fit:nth-child(4)) { margin-right: 5px; }

	/* Tabs */
	.tabs {
		display: grid;
		grid-template-columns: repeat(6, 115px) 1fr;
		height: 70px;
		border-bottom: 2px solid #f2f2f2;
		color: #666;
		font-weight: 400;
	}

	.tab {
		position: relative;
		display: flex;
		align-items: center;
		justify-content: center;
		padding-top: 1px;
	}

	.more { gap: 6px; padding-right: 4px; }
	.gear { padding-right: 1px; }

	.active {
		color: #333;
		font-weight: 700;
	}

	.active::after {
		content: '';
		position: absolute;
		bottom: 0;
		width: 23px;
		height: 6px;
		border-radius: 3px;
		background: #ff3b30;
	}

	/* Indicator row */
	.indicator {
		display: flex;
		height: 52px;
		padding: 0 8px 0 7px;
	}

	.pick {
		display: flex;
		align-items: center;
		justify-content: space-between;
		height: 35px;
		box-sizing: border-box;
		flex: none;
		border: none;
		border-radius: 4px;
		background: #f1f1f1;
		color: #444;
		font-family: 'Noto Sans CJK SC', sans-serif;
	}

	.caret { fill: #555; }
	.ma { width: 88px; margin-top: 10px; padding: 0 10px; }
	.vol { width: 112px; padding: 0 9px 0 10px; }
	.mac { width: 111px; padding: 0 10px; }

	.averages {
		flex: 1;
		margin: 0 0 0 8px;
	}

	.line {
		display: flex;
		align-items: center;
		gap: 13.700px;
		height: 28px;
	}

	.adjust {
		padding-top: 8px;
		color: #111;
	}

	/* Charts */
	.axis-text { fill: #969696; font-weight: 500; }
	.dates { fill: #858585; font-weight: 500; }
	.today { fill: #444; font-weight: 500; }
	.q { fill: #e33; font-family: Inter, sans-serif; font-weight: 500; }

	.panel {
		position: relative;
		color: #555;
	}

	.head {
		position: relative;
		z-index: 1;
		display: flex;
		align-items: center;
		padding-left: 15px;
	}

	.volume {
		height: 197px;
	}

	.volume .head { height: 35px; padding-top: 7px; }
	.volume .plot { margin-top: -52px; }
	.head :global(.v0) { margin-left: 10px; }
	.head :global(.v1) { margin-left: 14px; }
	.head :global(.v2) { margin-left: 14px; }
	.head :global(.v3) { margin-left: 5px; }
	.head :global(.v4) { margin-left: 4px; }

	.macd {
		height: 203px;
		border-bottom: 8px solid #f4f4f4;
	}

	.macd .head { align-items: flex-start; height: 62px; padding-top: 8px; }
	.macd .plot { margin-top: -77px; }
	.macd .line { height: 32px; gap: 12px; }

	.help {
		width: 23px;
		height: 23px;
		box-sizing: border-box;
		margin: 6px 17px 0 14px;
		border: 1.600px solid #999;
		border-radius: 50%;
		color: #999;
		font: 17px/20px Inter, sans-serif;
		text-align: center;
	}

	.head :global(.m2) { margin-left: 0; }
	.values { width: 439px; padding-top: 2px; }

	.link {
		color: #4a90e2;
		padding-top: 7px;
	}

	/* Bottom bar */
	footer {
		position: relative;
		display: flex;
		height: 155px;
		background: #1a1a1a;
		color: #aaa;
		border-radius: 0 0 9px 9px;
	}

	.index {
		width: 143px;
		padding: 10px 0 0 0;
		display: flex;
		flex-direction: column;
		align-items: center;
	}

	.index > svg:first-child { margin: 0 4px 5px 0; }
	.index > :global(.fit) { margin-right: 5px; }

	.index-row {
		display: flex;
		align-items: center;
		gap: 21px;
		margin: 6px 5px 0 0;
	}

	.item {
		display: flex;
		flex-direction: column;
		align-items: center;
		gap: 9px;
		width: 156px;
		padding-top: 9px;
	}

	.home {
		position: absolute;
		left: 248px;
		bottom: 17px;
		width: 273px;
		height: 10px;
		border-radius: 5px;
		background: #fff;
	}
</style>
